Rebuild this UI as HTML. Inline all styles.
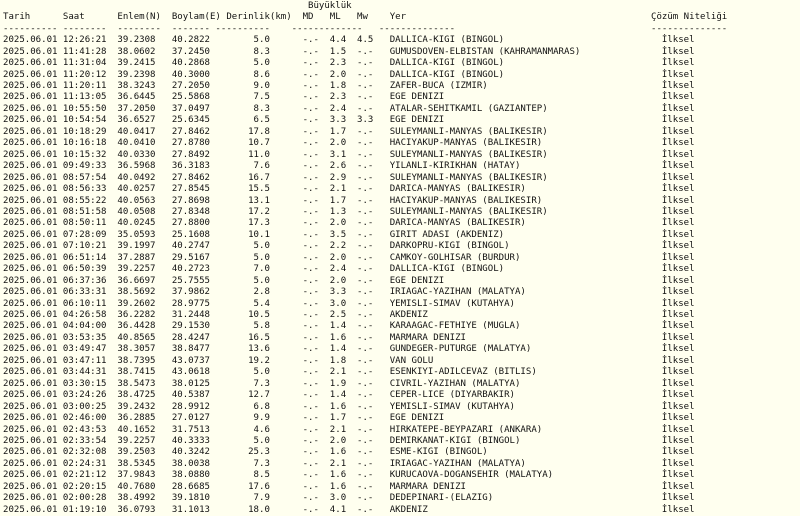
<!DOCTYPE html>
<html><head><meta charset="utf-8"><style>
html,body{margin:0;padding:0;background:#ffffef;width:800px;height:514px;overflow:hidden}
pre{position:absolute;margin:0;top:0.8px;font-family:"DejaVu Sans Mono","Liberation Mono",monospace;font-size:9.05px;line-height:11.46px;color:#111}
#l{left:3px}
#r{left:651px}
</style></head><body>
<pre id="l">                                                        Büyüklük
Tarih      Saat      Enlem(N)  Boylam(E) Derinlik(km)  MD   ML   Mw    Yer
---------- --------  --------  ------- ----------    -------------   --------------
2025.06.01 12:26:21  39.2308   40.2822        5.0      -.-  4.4  4.5   DALLICA-KIGI (BINGOL)
2025.06.01 11:41:28  38.0602   37.2450        8.3      -.-  1.5  -.-   GUMUSDOVEN-ELBISTAN (KAHRAMANMARAS)
2025.06.01 11:31:04  39.2415   40.2868        5.0      -.-  2.3  -.-   DALLICA-KIGI (BINGOL)
2025.06.01 11:20:12  39.2398   40.3000        8.6      -.-  2.0  -.-   DALLICA-KIGI (BINGOL)
2025.06.01 11:20:11  38.3243   27.2050        9.0      -.-  1.8  -.-   ZAFER-BUCA (IZMIR)
2025.06.01 11:13:05  36.6445   25.5868        7.5      -.-  2.3  -.-   EGE DENIZI
2025.06.01 10:55:50  37.2050   37.0497        8.3      -.-  2.4  -.-   ATALAR-SEHITKAMIL (GAZIANTEP)
2025.06.01 10:54:54  36.6527   25.6345        6.5      -.-  3.3  3.3   EGE DENIZI
2025.06.01 10:18:29  40.0417   27.8462       17.8      -.-  1.7  -.-   SULEYMANLI-MANYAS (BALIKESIR)
2025.06.01 10:16:18  40.0410   27.8780       10.7      -.-  2.0  -.-   HACIYAKUP-MANYAS (BALIKESIR)
2025.06.01 10:15:32  40.0330   27.8492       11.0      -.-  3.1  -.-   SULEYMANLI-MANYAS (BALIKESIR)
2025.06.01 09:49:33  36.5968   36.3183        7.6      -.-  2.6  -.-   YILANLI-KIRIKHAN (HATAY)
2025.06.01 08:57:54  40.0492   27.8462       16.7      -.-  2.9  -.-   SULEYMANLI-MANYAS (BALIKESIR)
2025.06.01 08:56:33  40.0257   27.8545       15.5      -.-  2.1  -.-   DARICA-MANYAS (BALIKESIR)
2025.06.01 08:55:22  40.0563   27.8698       13.1      -.-  1.7  -.-   HACIYAKUP-MANYAS (BALIKESIR)
2025.06.01 08:51:58  40.0508   27.8348       17.2      -.-  1.3  -.-   SULEYMANLI-MANYAS (BALIKESIR)
2025.06.01 08:50:11  40.0245   27.8800       17.3      -.-  2.0  -.-   DARICA-MANYAS (BALIKESIR)
2025.06.01 07:28:09  35.0593   25.1608       10.1      -.-  3.5  -.-   GIRIT ADASI (AKDENIZ)
2025.06.01 07:10:21  39.1997   40.2747        5.0      -.-  2.2  -.-   DARKOPRU-KIGI (BINGOL)
2025.06.01 06:51:14  37.2887   29.5167        5.0      -.-  2.0  -.-   CAMKOY-GOLHISAR (BURDUR)
2025.06.01 06:50:39  39.2257   40.2723        7.0      -.-  2.4  -.-   DALLICA-KIGI (BINGOL)
2025.06.01 06:37:36  36.6697   25.7555        5.0      -.-  2.0  -.-   EGE DENIZI
2025.06.01 06:33:31  38.5692   37.9862        2.8      -.-  3.3  -.-   IRIAGAC-YAZIHAN (MALATYA)
2025.06.01 06:10:11  39.2602   28.9775        5.4      -.-  3.0  -.-   YEMISLI-SIMAV (KUTAHYA)
2025.06.01 04:26:58  36.2282   31.2448       10.5      -.-  2.5  -.-   AKDENIZ
2025.06.01 04:04:00  36.4428   29.1530        5.8      -.-  1.4  -.-   KARAAGAC-FETHIYE (MUGLA)
2025.06.01 03:53:35  40.8565   28.4247       16.5      -.-  1.6  -.-   MARMARA DENIZI
2025.06.01 03:49:47  38.3057   38.8477       13.6      -.-  1.4  -.-   GUNDEGER-PUTURGE (MALATYA)
2025.06.01 03:47:11  38.7395   43.0737       19.2      -.-  1.8  -.-   VAN GOLU
2025.06.01 03:44:31  38.7415   43.0618        5.0      -.-  2.1  -.-   ESENKIYI-ADILCEVAZ (BITLIS)
2025.06.01 03:30:15  38.5473   38.0125        7.3      -.-  1.9  -.-   CIVRIL-YAZIHAN (MALATYA)
2025.06.01 03:24:26  38.4725   40.5387       12.7      -.-  1.4  -.-   CEPER-LICE (DIYARBAKIR)
2025.06.01 03:00:25  39.2432   28.9912        6.8      -.-  1.6  -.-   YEMISLI-SIMAV (KUTAHYA)
2025.06.01 02:46:00  36.2885   27.0127        9.9      -.-  1.7  -.-   EGE DENIZI
2025.06.01 02:43:53  40.1652   31.7513        4.6      -.-  2.1  -.-   HIRKATEPE-BEYPAZARI (ANKARA)
2025.06.01 02:33:54  39.2257   40.3333        5.0      -.-  2.0  -.-   DEMIRKANAT-KIGI (BINGOL)
2025.06.01 02:32:08  39.2503   40.3242       25.3      -.-  1.6  -.-   ESME-KIGI (BINGOL)
2025.06.01 02:24:31  38.5345   38.0038        7.3      -.-  2.1  -.-   IRIAGAC-YAZIHAN (MALATYA)
2025.06.01 02:21:12  37.9843   38.0880        8.5      -.-  1.6  -.-   KURUCAOVA-DOGANSEHIR (MALATYA)
2025.06.01 02:20:15  40.7680   28.6685       17.6      -.-  1.6  -.-   MARMARA DENIZI
2025.06.01 02:00:28  38.4992   39.1810        7.9      -.-  3.0  -.-   DEDEPINARI-(ELAZIG)
2025.06.01 01:19:10  36.0793   31.1013       18.0      -.-  4.1  -.-   AKDENIZ</pre>
<pre id="r">

Çözüm Niteliği
--------------
  İlksel
  İlksel
  İlksel
  İlksel
  İlksel
  İlksel
  İlksel
  İlksel
  İlksel
  İlksel
  İlksel
  İlksel
  İlksel
  İlksel
  İlksel
  İlksel
  İlksel
  İlksel
  İlksel
  İlksel
  İlksel
  İlksel
  İlksel
  İlksel
  İlksel
  İlksel
  İlksel
  İlksel
  İlksel
  İlksel
  İlksel
  İlksel
  İlksel
  İlksel
  İlksel
  İlksel
  İlksel
  İlksel
  İlksel
  İlksel
  İlksel
  İlksel</pre>
</body></html>
